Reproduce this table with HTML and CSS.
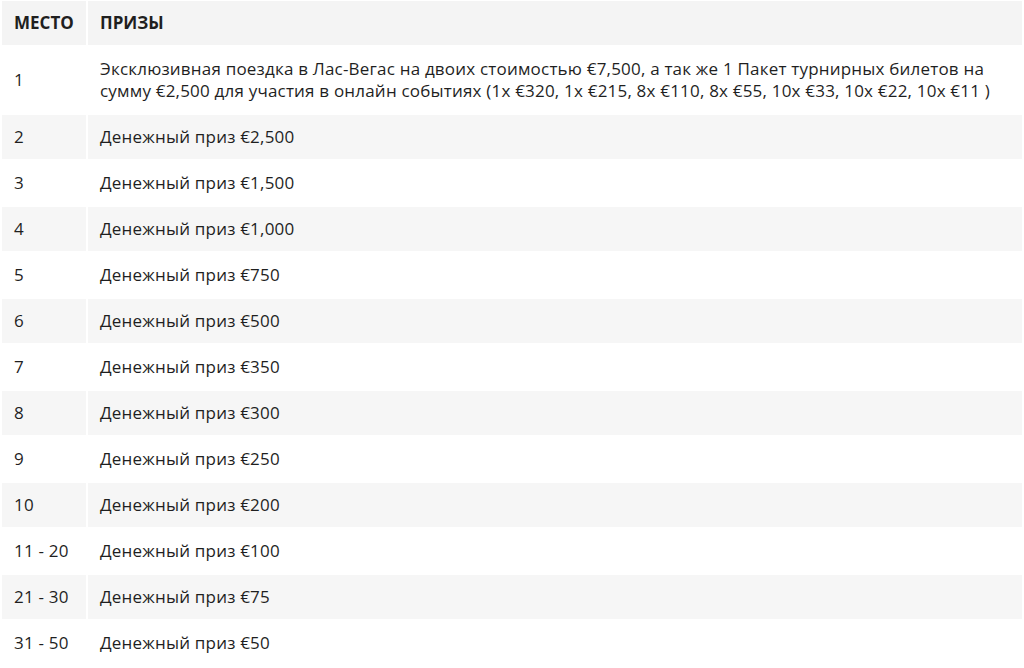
FILE: index.html
```html
<!DOCTYPE html>
<html lang="ru">
<head>
<meta charset="utf-8">
<title>Призы</title>
<link rel="stylesheet" href="styles.css">
</head>
<body>
<table class="prizes">
  <thead>
    <tr><th class="place">МЕСТО</th><th>ПРИЗЫ</th></tr>
  </thead>
  <tbody>
    <tr><td>1</td><td>Эксклюзивная поездка в Лас-Вегас на двоих стоимостью €7,500, а так же 1 Пакет турнирных билетов на сумму €2,500 для участия в онлайн событиях (1x €320, 1x €215, 8x €110, 8x €55, 10x €33, 10x €22, 10x €11 )</td></tr>
    <tr><td>2</td><td>Денежный приз €2,500</td></tr>
    <tr><td>3</td><td>Денежный приз €1,500</td></tr>
    <tr><td>4</td><td>Денежный приз €1,000</td></tr>
    <tr><td>5</td><td>Денежный приз €750</td></tr>
    <tr><td>6</td><td>Денежный приз €500</td></tr>
    <tr><td>7</td><td>Денежный приз €350</td></tr>
    <tr><td>8</td><td>Денежный приз €300</td></tr>
    <tr><td>9</td><td>Денежный приз €250</td></tr>
    <tr><td>10</td><td>Денежный приз €200</td></tr>
    <tr><td>11 - 20</td><td>Денежный приз €100</td></tr>
    <tr><td>21 - 30</td><td>Денежный приз €75</td></tr>
    <tr><td>31 - 50</td><td>Денежный приз €50</td></tr>
  </tbody>
</table>
</body>
</html>
```
FILE: styles.css
```css
html, body {
  margin: 0;
  padding: 0;
  background: #ffffff;
}
body {
  font-family: "Open Sans", "Liberation Sans", sans-serif;
  font-size: 17px;
  line-height: 22px;
  color: #1f1f1f;
}
.prizes {
  width: 1024px;
  margin-top: -1px;
  border-collapse: separate;
  border-spacing: 2px;
}
.prizes th,
.prizes td {
  padding: 11px 12px;
  text-align: left;
  vertical-align: middle;
}
.prizes td {
  letter-spacing: 0.2px;
}
.prizes th {
  font-weight: 700;
  background: #f4f4f4;
}
.prizes .place {
  width: 60px;
}
.prizes tbody tr:nth-child(even) td {
  background: #f6f6f6;
}
```
